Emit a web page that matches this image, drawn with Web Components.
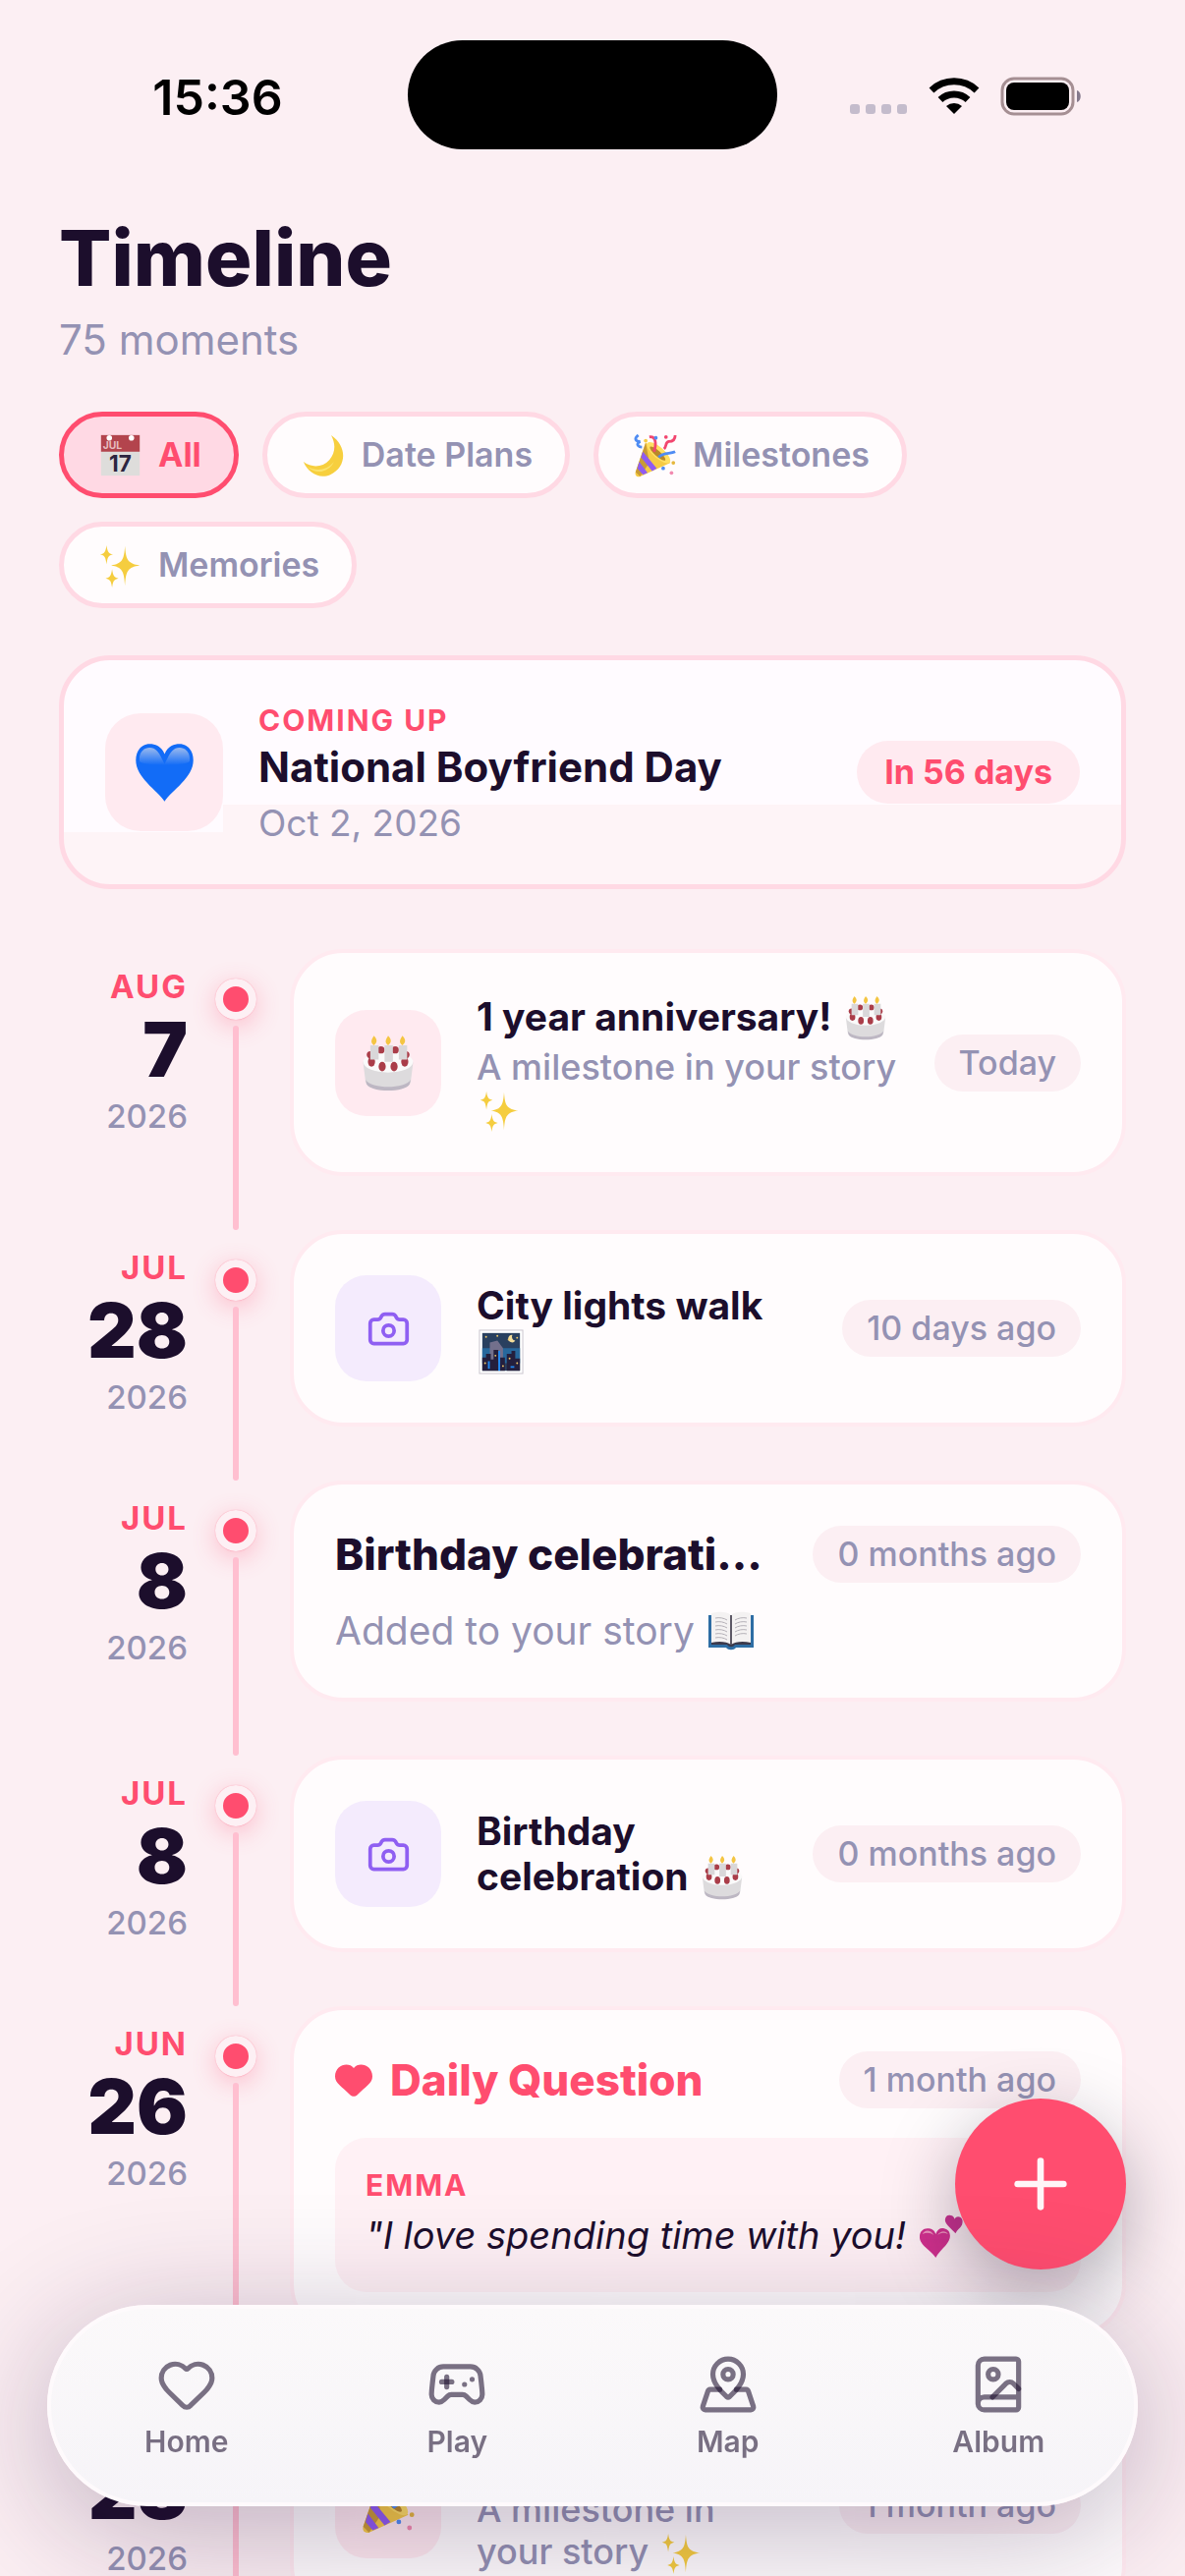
<!DOCTYPE html>
<html lang="en">
<head>
<meta charset="utf-8">
<meta name="viewport" content="width=device-width, initial-scale=1">
<title>Timeline</title>
<style>
    html, body {
        margin: 0;
        height: 100%;
    }
    body {
        --ink: #1c0e2c;
        --muted: #9492b3;
        --accent: #ff4d6f;
        --blush: #ffd9e4;
        --soft: #ffeaf0;
        --page: #fceff3;
        --card: #fffcfd;
        background: var(--page);
        color: var(--ink);
        font-family: Inter, "Liberation Sans", sans-serif;
    }
</style>
</head>
<body>
<timeline-app></timeline-app>

<script>
const EMOJI = {
    calendar: `
        <rect x="3" y="2" width="42" height="44" fill="#dedddb"/>
        <rect x="3" y="2" width="42" height="18" fill="#b3444d"/>
        <circle cx="12" cy="5" r="3" fill="#fff"/><circle cx="36" cy="5" r="3" fill="#fff"/>
        <text x="5" y="17" font-size="11" fill="#e6bcbf" font-family="Inter, sans-serif">JUL</text>
        <text x="24" y="42" font-size="24" text-anchor="middle" fill="#2c2540" font-family="Inter, sans-serif">17</text>`,
    moon: `
        <path d="M32 2C50 14 49 37 31 45C19 50 7 43 2 31C11 38 23 37 30 29C37 21 37 11 32 2Z" fill="#f7cf3e"/>
        <path d="M6 36C16 42 28 40 35 31C30 42 16 46 6 36Z" fill="#fbe36d"/>`,
    party: `
        <path d="M14 10L41 32L8 47C4 48 2 45 3 42Z" fill="#f6cb45"/>
        <path d="M14 10L3 42L8 47L18 32Z" fill="#c99b35"/>
        <path d="M11 20L26 38L21 41L9 26Z" fill="#8f5bf2"/>
        <path d="M7 31L16 43L11 45L5 38Z" fill="#8f5bf2"/>
        <ellipse cx="28" cy="21" rx="6" ry="16" transform="rotate(-49 28 21)" fill="#ffdf62"/>
        <ellipse cx="27" cy="22" rx="3" ry="11" transform="rotate(-49 27 22)" fill="#b98828"/>
        <path d="M18 4C25 3 26 11 23 20M46 2C46 8 42 9 39 9C35 10 37 14 34 17" fill="none" stroke="#f2466f" stroke-width="3"/>
        <path d="M6 2C1 6 3 9 8 9C2 12 7 15 10 15M28 26C34 20 40 23 46 20" fill="none" stroke="#4f8cf3" stroke-width="3"/>
        <circle cx="25" cy="5" r="2" fill="#4f8cf3"/><circle cx="36" cy="4" r="2" fill="#f2466f"/>
        <circle cx="44" cy="32" r="2" fill="#e5b73c"/><circle cx="33" cy="38" r="2" fill="#4f8cf3"/>
        <circle cx="42" cy="43" r="2" fill="#f28ab0"/><circle cx="14" cy="8" r="2" fill="#f6cb45"/>`,
    sparkles: `
        <path d="M29 3C30 18 32 22 45 24C32 26 30 30 29 46C28 30 26 26 14 24C26 22 28 18 29 3Z" fill="#f5cd3f"/>
        <path d="M9 2C10 9 11 11 16 12C11 13 10 15 9 23C8 15 7 13 2 12C7 11 8 9 9 2Z" fill="#f5cd3f"/>
        <path d="M15 28C16 35 17 37 22 38C17 39 16 41 15 48C14 41 13 39 8 38C13 37 14 35 15 28Z" fill="#f5cd3f"/>`,
    heart: `
        <defs><linearGradient id="blue" x2="0" y2="1"><stop offset="0" stop-color="#9ab9ee"/><stop offset="1" stop-color="#126cf7"/></linearGradient></defs>
        <path d="M24 47C18 38 1 28 1 14C1 6 6 1 12 1C18 1 22 4 24 9C26 4 30 1 36 1C42 1 47 6 47 14C47 28 30 38 24 47Z" fill="#126cf7"/>
        <path d="M4 15C3 7 8 4 12 4C18 4 20 9 24 17C28 9 30 4 36 4C40 4 45 7 44 15C40 19 8 19 4 15Z" fill="url(#blue)"/>`,
    cake: `
        <path d="M3 24C3 15 45 15 45 24L43 40C42 49 6 49 5 40Z" fill="#dddbdd"/>
        <path d="M5 38C10 46 38 46 43 38L42 42C38 49 10 49 6 42Z" fill="#bdb7c3"/>
        <ellipse cx="24" cy="23" rx="21" ry="9" fill="#fafafa"/>
        <g fill="#aa3d49"><circle cx="18" cy="13" r="3"/><circle cx="30" cy="13" r="3"/><circle cx="9" cy="17" r="3"/><circle cx="39" cy="17" r="3"/><ellipse cx="10" cy="23" rx="3" ry="4"/><ellipse cx="19" cy="27" rx="3" ry="4"/><ellipse cx="29" cy="27" rx="3" ry="4"/><ellipse cx="38" cy="23" rx="3" ry="4"/></g>
        <path d="M9 9h7v12h-7zM21 9h7v14h-7zM33 9h7v12h-7z" fill="#d9d7d9"/>
        <path d="M12 9C8 6 11 3 12 1C14 3 16 6 12 9ZM24 9C20 6 23 3 24 1C26 3 28 6 24 9ZM36 9C32 6 35 3 36 1C38 3 40 6 36 9Z" fill="#f4c542"/>`,
    night: `
        <rect x="1" y="1" width="46" height="46" fill="#fff" stroke="#c9c4cd"/>
        <rect x="4" y="4" width="40" height="40" fill="#29405f"/>
        <path d="M4 20H44V36H4Z" fill="#27689c"/>
        <path d="M12 14L20 12L26 20V34H12Z" fill="#73708c"/>
        <path d="M4 30h4v-4h5v6h3V22h5v22H4ZM23 44V30h5v14ZM30 44V26h5v-3h4v8h5v13Z" fill="#241f3d"/>
        <path d="M22 23v21M11 34v8M34 40h4" stroke="#2089f2" stroke-width="2"/>
        <path d="M36 6a4 4 0 1 0 3 6a4 4 0 0 1-3-6Z" fill="#f4dd9a"/>
        <g fill="#f0c869"><circle cx="8" cy="8" r="1"/><circle cx="20" cy="7" r="1"/><circle cx="32" cy="11" r="1"/><circle cx="41" cy="9" r="1"/><circle cx="7" cy="36" r="1"/><circle cx="18" cy="28" r="1"/><circle cx="33" cy="31" r="1"/><circle cx="41" cy="36" r="1"/><circle cx="26" cy="39" r="1"/></g>`,
    book: `
        <path d="M1 8H47V41H29C27 44 21 44 19 41H1Z" fill="#2e6da4"/>
        <path d="M4 34H44V38H28C26 41 22 41 20 38H4Z" fill="#3b3a4c"/>
        <path d="M4 6C12 4 20 4 24 8C28 4 36 4 44 6V36C36 34 28 35 24 38C20 35 12 34 4 36Z" fill="#f4f2f2"/>
        <path d="M24 8V38" stroke="#5d5966" stroke-width="2"/>
        <path d="M8 11C12 10 17 11 20 13M8 15C12 14 17 15 20 17M8 19C12 18 17 19 20 21M8 23C12 22 17 23 20 25M8 27C12 26 17 27 20 29M8 31C12 30 17 31 20 33M40 11C36 10 31 11 28 13M40 15C36 14 31 15 28 17M40 19C36 18 31 19 28 21M40 23C36 22 31 23 28 25M40 27C36 26 31 27 28 29" fill="none" stroke="#b5b1b8"/>`,
    hearts: `
        <path d="M18 47C14 40 1 34 1 25C1 19 5 16 9 16C14 16 17 18 18 22C20 17 23 15 27 16C32 17 34 21 33 26C31 34 22 39 18 47Z" fill="#d2318e"/>
        <path d="M39 21C36 17 28 12 28 7C28 3 31 1 34 2C36 2 38 4 38 6C40 3 42 3 44 4C47 6 47 9 46 12C44 16 41 17 39 21Z" fill="#c93290"/>
        <path d="M4 22C6 17 13 17 16 23C12 20 8 20 4 22ZM20 23C23 18 29 18 31 22C27 20 24 20 20 23Z" fill="#ef96bd"/>`
};

const ICONS = {
    camera: `<path d="M13.997 4a2 2 0 0 1 1.76 1.05l.486.9A2 2 0 0 0 18.003 7H20a2 2 0 0 1 2 2v9a2 2 0 0 1-2 2H4a2 2 0 0 1-2-2V9a2 2 0 0 1 2-2h1.997a2 2 0 0 0 1.759-1.048l.489-.904A2 2 0 0 1 10.004 4z"/><circle cx="12" cy="13" r="3"/>`,
    home: `<path d="M2 9.5a5.5 5.5 0 0 1 9.591-3.676.56.56 0 0 0 .818 0A5.49 5.49 0 0 1 22 9.5c0 2.29-1.5 4-3 5.5l-5.492 5.313a2 2 0 0 1-3 .019L5 15c-1.5-1.5-3-3.2-3-5.5"/>`,
    play: `<path d="M6 11h4"/><path d="M8 9v4"/><path d="M15 12h.01"/><path d="M18 10h.01"/><path d="M17.32 5H6.68a4 4 0 0 0-3.978 3.59c-.006.052-.01.101-.017.152C2.604 9.416 2 14.456 2 16a3 3 0 0 0 3 3c1 0 1.5-.5 2-1l1.414-1.414A2 2 0 0 1 9.828 16h4.344a2 2 0 0 1 1.414.586L17 18c.5.5 1 1 2 1a3 3 0 0 0 3-3c0-1.545-.604-6.584-.685-7.258-.007-.05-.011-.1-.017-.151A4 4 0 0 0 17.32 5z"/>`,
    map: `<path d="M18 8c0 3.613-3.869 7.429-5.393 8.795a1 1 0 0 1-1.214 0C9.87 15.429 6 11.613 6 8a6 6 0 0 1 12 0"/><circle cx="12" cy="8" r="2"/><path d="M8.714 14h-3.71a1 1 0 0 0-.948.683l-2.004 6A1 1 0 0 0 3 22h18a1 1 0 0 0 .948-1.316l-2-6a1 1 0 0 0-.949-.684h-3.712"/>`,
    album: `<path d="m20 13.7-2.1-2.1a2 2 0 0 0-2.8 0L9.7 17"/><path d="M4 19.5v-15A2.5 2.5 0 0 1 6.5 2H19a1 1 0 0 1 1 1v18a1 1 0 0 1-1 1H6.5a1 1 0 0 1 0-5H20"/><circle cx="10" cy="8" r="2"/>`,
    plus: `<path d="M5 12h14"/><path d="M12 5v14"/>`
};

// small helper: every element gets an open shadow root filled from markup
class BaseElement extends HTMLElement {
    connectedCallback () {
        if (this.shadowRoot) return
        const template = document.createElement ("template")
        template.innerHTML = this.render ()
        this.attachShadow ({ mode: "open" }).appendChild (template.content.cloneNode (true))
    }
}

// sits on the text line without making it taller
class EmojiIcon extends BaseElement {
    render () {
        return /*html*/`
        <style>
            :host { display: inline-block; width: var(--emoji, 48px); height: var(--emoji, 48px); margin: -8px 2px; vertical-align: -2px; flex: none; }
            svg { display: block; width: 100%; height: 100%; }
        </style>
        <svg viewBox="0 0 48 48" aria-hidden="true">${EMOJI[this.getAttribute ("name")]}</svg>`
    }
}

class LineIcon extends BaseElement {
    render () {
        return /*html*/`
        <style>
            :host { display: block; width: var(--icon, 64px); height: var(--icon, 64px); }
            svg { display: block; width: 100%; height: 100%; fill: none; stroke: currentColor; stroke-width: 2; stroke-linecap: round; stroke-linejoin: round; }
        </style>
        <svg viewBox="0 0 24 24" aria-hidden="true">${ICONS[this.getAttribute ("name")]}</svg>`
    }
}

class StatusBar extends BaseElement {
    render () {
        return /*html*/`
        <style>
            :host { display: grid; grid-template-columns: 1fr 376px 1fr; align-items: center; height: 111px; padding-top: 41px; color: #000; }
            time { justify-self: center; padding: 4px 0 0 28px; font-size: 50px; font-weight: 600; line-height: 60px; }
            .island { height: 111px; border-radius: 56px; background: #000; }
            .system { display: flex; align-items: center; justify-content: flex-end; gap: 21px; padding: 2px 104px 0 0; }
            svg { display: block; }
        </style>
        <time>15:36</time>
        <div class="island"></div>
        <div class="system">
            <svg width="60" height="40" viewBox="0 0 60 40" fill="#c4bccc"><rect x="1" y="28" width="10" height="10" rx="3"/><rect x="17" y="28" width="10" height="10" rx="3"/><rect x="33" y="28" width="10" height="10" rx="3"/><rect x="49" y="28" width="10" height="10" rx="3"/></svg>
            <svg width="52" height="40" viewBox="0 0 52 40">
                <path d="M26 38L18 30A12 12 0 0 1 34 30Z"/>
                <path d="M12 23.5A20.5 20.5 0 0 1 40 23.5" fill="none" stroke="#000" stroke-width="7"/>
                <path d="M3 14A33.5 33.5 0 0 1 49 14" fill="none" stroke="#000" stroke-width="7"/>
            </svg>
            <svg width="84" height="40" viewBox="0 0 84 40">
                <rect x="2" y="2" width="72" height="36" rx="12" fill="none" stroke="#a58f93" stroke-width="3"/>
                <rect x="6" y="6" width="64" height="28" rx="8"/>
                <path d="M78 14C83 15 83 25 78 26Z" fill="#84798c"/>
            </svg>
        </div>`
    }
}

class FilterChip extends BaseElement {
    render () {
        return /*html*/`
        <style>
            :host { display: block; --emoji: 45px; }
            button {
                display: flex; align-items: center; gap: 14px;
                height: 88px; padding: 0 33px;
                border: 5px solid var(--blush); border-radius: 44px;
                background: var(--card); color: var(--muted);
                font: 600 34px/44px Inter, "Liberation Sans", sans-serif;
            }
            :host([active]) button { background: var(--blush); border-color: var(--accent); color: var(--accent); font-weight: 700; }
        </style>
        <button type="button" aria-pressed="${this.hasAttribute ("active")}"><emoji-icon name="${this.getAttribute ("icon")}"></emoji-icon><slot></slot></button>`
    }
}

class TimePill extends BaseElement {
    render () {
        return /*html*/`
        <style>
            :host { display: block; flex: none; padding: 9px 25px; border-radius: 32px; background: var(--page); color: var(--muted); font-size: 34px; font-weight: 500; line-height: 40px; white-space: nowrap; }
            :host([strong]) { padding: 12px 28px; background: var(--soft); color: var(--accent); font-weight: 700; }
        </style>
        <slot></slot>`
    }
}

class UpcomingCard extends BaseElement {
    render () {
        return /*html*/`
        <style>
            :host {
                display: flex; align-items: center; gap: 36px;
                padding: 42px; border: 5px solid var(--blush); border-radius: 52px;
                background:
                    linear-gradient(#fffbff, #fffbff) left top / 162px 175px no-repeat,
                    linear-gradient(#fffbff, #fffbff) left top / 100% 147px no-repeat,
                    #fef4f7;
            }
            .icon { display: grid; place-items: center; flex: none; width: 120px; height: 120px; border-radius: 36px; background: var(--soft); --emoji: 61px; }
            .text { flex: 1; min-width: 0; }
            .label { color: var(--accent); font-size: 30px; font-weight: 700; line-height: 38px; letter-spacing: 2px; }
            h2 { margin: 3px 0 11px; font-size: 42px; font-weight: 700; line-height: 52px; }
            .date { color: var(--muted); font-size: 37px; line-height: 40px; }
        </style>
        <div class="icon"><emoji-icon name="heart"></emoji-icon></div>
        <div class="text">
            <div class="label">COMING UP</div>
            <h2><slot></slot></h2>
            <div class="date"><slot name="date"></slot></div>
        </div>
        <slot name="pill"></slot>`
    }
}

class TimelineRow extends BaseElement {
    render () {
        return /*html*/`
        <style>
            :host { display: flex; }
            .date { box-sizing: border-box; flex: none; width: 131px; padding-top: 18px; text-align: right; line-height: 40px; font-size: 33px; }
            .month { color: var(--accent); font-weight: 700; letter-spacing: 2px; }
            .day { margin: 6px 0 10px; font-size: 77px; font-weight: 900; line-height: 76px; }
            .year { color: var(--muted); font-weight: 500; }
            .rail { flex: none; display: flex; flex-direction: column; align-items: center; gap: 6px; width: 42px; margin: 0 34px 0 28px; padding-top: 30px; }
            .dot { box-sizing: border-box; width: 42px; height: 42px; border: 8px solid #fdf0f4; border-radius: 50%; background: var(--accent); box-shadow: 0 6px 24px rgba(255, 77, 111, .3), 0 0 1px rgba(255, 77, 111, .6); }
            .line { flex: 1; width: 6px; border-radius: 3px; background: #ffbfd0; }
            .card { box-sizing: border-box; flex: 1; min-width: 0; margin-bottom: 55px; padding: 42px; border: 4px solid var(--soft); border-radius: 54px; background: var(--card); }
        </style>
        <div class="date">
            <div class="month">${this.getAttribute ("month")}</div>
            <div class="day">${this.getAttribute ("day")}</div>
            <div class="year">${this.getAttribute ("year")}</div>
        </div>
        <div class="rail"><div class="dot"></div><div class="line"></div></div>
        <div class="card"><slot></slot></div>`
    }
}

// icon tile, title with optional sub text, pill
class MomentItem extends BaseElement {
    render () {
        const emoji = this.getAttribute ("emoji")
        return /*html*/`
        <style>
            :host { display: flex; align-items: center; gap: 36px; --icon: 45px; }
            .tile { display: grid; place-items: center; flex: none; width: 108px; height: 108px; border-radius: 32px; background: #f4ebfd; color: #8f5ff2; --emoji: 58px; }
            .tile.emoji { background: var(--soft); }
            .text { flex: 1; min-width: 0; --emoji: 46px; }
            .title { font-size: 39px; font-weight: 700; line-height: 46px; }
            .sub { display: block; margin-top: 7px; color: var(--muted); font-size: 36px; font-weight: 500; line-height: 43px; --emoji: 43px; }
            :host(:not([detailed])) .sub { display: none; }
        </style>
        <div class="tile ${emoji ? "emoji" : ""}">${emoji ? `<emoji-icon name="${emoji}"></emoji-icon>` : `<line-icon name="camera"></line-icon>`}</div>
        <div class="text">
            <div class="title"><slot></slot></div>
            <div class="sub"><slot name="sub"></slot></div>
        </div>
        <slot name="pill"></slot>`
    }
}

class StoryItem extends BaseElement {
    render () {
        return /*html*/`
        <style>
            :host { display: block; }
            header { display: flex; align-items: center; justify-content: space-between; gap: 44px; }
            .title { min-width: 0; overflow: hidden; text-overflow: ellipsis; white-space: nowrap; font-size: 44px; font-weight: 800; line-height: 58px; }
            .body { margin-top: 23px; color: var(--muted); font-size: 39px; line-height: 52px; --emoji: 48px; }
        </style>
        <header><div class="title"><slot></slot></div><slot name="pill"></slot></header>
        <div class="body"><slot name="body"></slot></div>`
    }
}

class QuestionItem extends BaseElement {
    render () {
        return /*html*/`
        <style>
            :host { display: block; }
            header { display: flex; align-items: center; gap: 18px; margin-bottom: 30px; color: var(--accent); }
            header svg { flex: none; width: 38px; height: 38px; }
            .title { flex: 1; font-size: 44px; font-weight: 800; line-height: 58px; }
            blockquote { margin: 0; padding: 27px 31px 33px; border-radius: 32px; background: #fff1f5; }
            .author { color: var(--accent); font-size: 30px; font-weight: 700; line-height: 43px; letter-spacing: 2px; }
            .quote { margin-top: 4px; font-size: 38px; font-style: italic; line-height: 50px; white-space: nowrap; --emoji: 46px; }
        </style>
        <header>
            <svg viewBox="0 0 22 22" fill="currentColor" aria-hidden="true"><path d="M0 9C0 2 8 0 11 4C14 0 22 2 22 9C22 13 18 15 13 20C12 21 10 21 9 20C4 15 0 13 0 9Z"/></svg>
            <div class="title">Daily Question</div>
            <slot name="pill"></slot>
        </header>
        <blockquote>
            <div class="author">${this.getAttribute ("author")}</div>
            <div class="quote"><slot></slot></div>
        </blockquote>`
    }
}

class AddButton extends BaseElement {
    render () {
        return /*html*/`
        <style>
            :host { position: fixed; right: 60px; bottom: 312px; z-index: 1; --icon: 80px; }
            button { display: grid; place-items: center; width: 174px; height: 174px; padding: 0; border: 0; border-radius: 50%; background: var(--accent); color: #fff5f8; box-shadow: 0 24px 72px rgba(28, 20, 44, .34); }
        </style>
        <button type="button" aria-label="Add moment"><line-icon name="plus"></line-icon></button>`
    }
}

class TabBar extends BaseElement {
    render () {
        const tabs = ["Home", "Play", "Map", "Album"]
        return /*html*/`
        <style>
            :host { position: fixed; left: 48px; right: 48px; bottom: 71px; z-index: 2; }
            nav {
                display: grid; grid-template-columns: repeat(4, 1fr);
                border: 4px solid #fefafc; border-radius: 103px;
                background: linear-gradient(#fbf9fa, #f6f4f8);
                box-shadow: 0 24px 130px rgba(40, 16, 64, .3);
            }
            a { display: flex; flex-direction: column; align-items: center; gap: 8px; padding: 46px 0 43px; color: rgba(28, 14, 44, .58); font-size: 30px; font-weight: 600; line-height: 38px; text-decoration: none; --icon: 62px; }
        </style>
        <nav>${tabs.map ((t) => `<a href="#${t.toLowerCase ()}"><line-icon name="${t.toLowerCase ()}"></line-icon>${t}</a>`).join ("")}</nav>`
    }
}

class TimelineApp extends BaseElement {
    render () {
        return /*html*/`
        <style>
            :host { display: block; height: 100vh; overflow: hidden; }
            main { padding: 66px 60px 0; }
            h1 { margin: 0; font-size: 79px; font-weight: 800; line-height: 88px; }
            .count { margin: 12px 0 0; color: var(--muted); font-size: 42px; line-height: 56px; }
            .filters { display: flex; flex-wrap: wrap; gap: 24px; margin: 45px 0 48px; }
            .rows { margin-top: 61px; }
        </style>
        <status-bar></status-bar>
        <main>
            <h1>Timeline</h1>
            <p class="count">75 moments</p>
            <div class="filters">
                <filter-chip icon="calendar" active>All</filter-chip>
                <filter-chip icon="moon">Date Plans</filter-chip>
                <filter-chip icon="party">Milestones</filter-chip>
                <filter-chip icon="sparkles">Memories</filter-chip>
            </div>
            <upcoming-card>National Boyfriend Day<span slot="date">Oct 2, 2026</span><time-pill slot="pill" strong>In 56 days</time-pill></upcoming-card>
            <div class="rows">
                <timeline-row month="AUG" day="7" year="2026">
                    <moment-item emoji="cake" detailed>1 year anniversary! <emoji-icon name="cake"></emoji-icon><span slot="sub">A milestone in your story <emoji-icon name="sparkles"></emoji-icon></span><time-pill slot="pill">Today</time-pill></moment-item>
                </timeline-row>
                <timeline-row month="JUL" day="28" year="2026">
                    <moment-item>City lights walk <emoji-icon name="night"></emoji-icon><time-pill slot="pill">10 days ago</time-pill></moment-item>
                </timeline-row>
                <timeline-row month="JUL" day="8" year="2026">
                    <story-item>Birthday celebration <emoji-icon name="cake"></emoji-icon><span slot="body">Added to your story <emoji-icon name="book"></emoji-icon></span><time-pill slot="pill">0 months ago</time-pill></story-item>
                </timeline-row>
                <timeline-row month="JUL" day="8" year="2026">
                    <moment-item>Birthday celebration <emoji-icon name="cake"></emoji-icon><time-pill slot="pill">0 months ago</time-pill></moment-item>
                </timeline-row>
                <timeline-row month="JUN" day="26" year="2026">
                    <question-item author="EMMA">"I love spending time with you! <emoji-icon name="hearts"></emoji-icon><time-pill slot="pill">1 month ago</time-pill></question-item>
                </timeline-row>
                <timeline-row month="JUN" day="23" year="2026">
                    <moment-item emoji="party" detailed>&nbsp;<span slot="sub">A milestone in your&nbsp;story <emoji-icon name="sparkles"></emoji-icon></span><time-pill slot="pill">1 month ago</time-pill></moment-item>
                </timeline-row>
            </div>
        </main>
        <add-button></add-button>
        <tab-bar></tab-bar>`
    }
}

customElements.define ("emoji-icon", EmojiIcon)
customElements.define ("line-icon", LineIcon)
customElements.define ("status-bar", StatusBar)
customElements.define ("filter-chip", FilterChip)
customElements.define ("time-pill", TimePill)
customElements.define ("upcoming-card", UpcomingCard)
customElements.define ("timeline-row", TimelineRow)
customElements.define ("moment-item", MomentItem)
customElements.define ("story-item", StoryItem)
customElements.define ("question-item", QuestionItem)
customElements.define ("add-button", AddButton)
customElements.define ("tab-bar", TabBar)
customElements.define ("timeline-app", TimelineApp)
</script>
</body>
</html>
